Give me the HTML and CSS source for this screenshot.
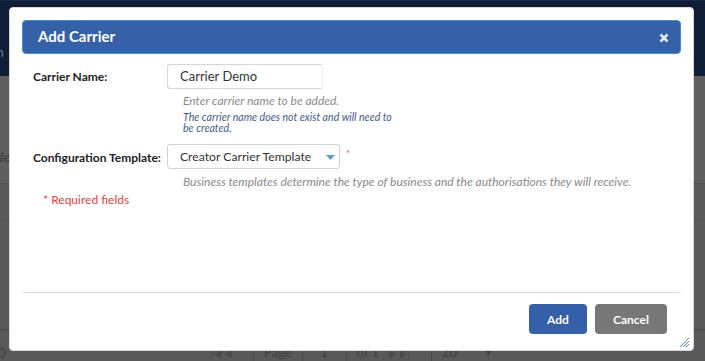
FILE: index.html
```html
<!DOCTYPE html>
<html>
<head>
<meta charset="utf-8">
<link rel="stylesheet" href="styles.css">
</head>
<body>
<div class="page">
  <div class="topbar"><span class="tb-text">n</span></div>
  <div class="content">
    <div class="row row-hl"><span class="row-text">de</span></div>
    <div class="row"></div>
    <div class="row row-tall"></div>
    <div class="pager">
      <span class="pg-left">0</span>
      <span class="pg-nav">|◀ ◀</span>
      <span class="pg-cell">Page</span>
      <span class="pg-cell pg-num">1</span>
      <span class="pg-cell">of 1</span>
      <span class="pg-nav">▶ ▶|</span>
      <span class="pg-cell pg-size">20 <span class="pg-caret">▾</span></span>
    </div>
  </div>
</div>

<div class="modal">
  <div class="modal-header">
    <span class="modal-title">Add Carrier</span>
    <svg class="close" width="10" height="10" viewBox="0 0 10 10"><path d="M1.5 1.5 L8.5 8.5 M8.5 1.5 L1.5 8.5" stroke="#e4e8f2" stroke-width="2.6" stroke-linecap="butt"/></svg>
  </div>
  <div class="modal-body">
    <div class="field">
      <label class="label">Carrier Name:</label>
      <div class="control">
        <div class="input">Carrier Demo</div>
        <div class="hint">Enter carrier name to be added.</div>
        <div class="note">The carrier name does not exist and will need to be created.</div>
      </div>
    </div>
    <div class="field field-2">
      <label class="label">Configuration Template:</label>
      <div class="control">
        <div class="select-row">
          <div class="select">Creator Carrier Template
            <svg class="caret" width="9" height="5" viewBox="0 0 9 5"><path d="M0 0 H9 L4.5 5 Z" fill="#5b9bd5"/></svg>
          </div>
          <span class="req-star">*</span>
        </div>
        <div class="hint">Business templates determine the type of business and the authorisations they will receive.</div>
      </div>
    </div>
    <div class="required">* Required fields</div>
  </div>
  <div class="modal-footer">
    <button class="btn btn-primary">Add</button>
    <button class="btn btn-cancel">Cancel</button>
  </div>
  <svg class="grip" width="11" height="11" viewBox="0 0 11 11"><path d="M10 1 L1 10 M10 4 L4 10 M10 7 L7 10" stroke="#4d90d9" stroke-width="1"/></svg>
</div>
</body>
</html>
```

FILE: styles.css
```css
* { box-sizing: border-box; }
html, body { margin: 0; padding: 0; }
body {
  width: 705px;
  height: 361px;
  overflow: hidden;
  position: relative;
  font-family: Lato, "Open Sans", sans-serif;
  background: #5a5a5a;
}
.page {
  display: flex;
  flex-direction: column;
  height: 361px;
}
.topbar {
  height: 76px;
  background: #0f1d37;
  border-top: 1px solid #16284a;
  position: relative;
}
.tb-text {
  display: block;
  margin-top: 42px;
  margin-left: -4px;
  color: #6d7890;
  font-size: 14px;
}
.content {
  flex: 1;
  display: flex;
  flex-direction: column;
  background: #595959;
}
.row {
  height: 36px;
  border-bottom: 1px solid #4f4f4f;
}
.row-hl {
  height: 108px;
  background: #5f5f5f;
  border-bottom: 1px solid #525252;
}
.row-text {
  display: block;
  margin-top: 72px;
  margin-left: -4px;
  color: #3a3a3a;
  font-size: 14px;
  font-style: italic;
}
.row-tall { height: 110px; }
.pager {
  display: flex;
  align-items: center;
  height: 30px;
  border-top: 1px solid #4c4c4c;
  color: #3e3e3e;
  font-size: 13px;
  padding-top: 14px;
}
.pg-left { margin-left: -2px; width: 213px; }
.pg-nav { width: 42px; color: #4a4a4a; font-size: 10px; }
.pg-cell { padding: 0 10px; border-left: 1px solid #4a4a4a; height: 16px; line-height: 14px; }
.pg-num { width: 44px; text-align: center; }
.pg-size { width: 70px; display: flex; justify-content: space-between; }
.pg-caret { font-size: 10px; }

.modal {
  position: absolute;
  left: 9px;
  top: 7px;
  width: 685px;
  height: 344px;
  background: #fff;
  border-radius: 4px;
  border: 1px solid #d8d8d8;
  padding: 12px 12px 0 12px;
  display: flex;
  flex-direction: column;
}
.modal-header {
  height: 34px;
  background: #3461a7;
  border: 1px solid #3d8ee0;
  border-radius: 4px;
  display: flex;
  align-items: center;
  justify-content: space-between;
  padding: 0 11px 0 15px;
}
.modal-title {
  color: #fff;
  font-weight: 700;
  font-size: 15px;
  margin-top: -3px;
}
.close { margin-top: 1px; }
.modal-body {
  flex: 1;
  padding: 10px 0 0 11px;
}
.field {
  display: flex;
  align-items: flex-start;
}
.label {
  width: 134px;
  font-size: 12px;
  font-weight: 700;
  color: #222;
  padding-top: 5px;
}
.control { display: flex; flex-direction: column; }
.input {
  width: 156px;
  height: 25px;
  border: 1px solid #d6d6d6;
  border-right-color: #f0f0f0;
  border-radius: 3px;
  font-size: 13px;
  color: #333;
  padding: 3px 0 0 12px;
}
.hint {
  font-size: 12px;
  font-style: italic;
  color: #8a8a8a;
  margin-top: 4px;
  margin-left: 16px;
  line-height: 15px;
}
.note {
  font-size: 10.6px;
  font-style: italic;
  color: #3f5c8c;
  margin-left: 16px;
  margin-top: 4px;
  line-height: 11px;
  width: 212px;
}
.field-2 { margin-top: 10px; }
.field-2 .label { padding-top: 6px; }
.select-row { display: flex; align-items: flex-start; }
.select {
  width: 173px;
  height: 25px;
  border: 1px solid #d2d2d2;
  border-radius: 3px;
  font-size: 12.2px;
  color: #333;
  padding: 4px 0 0 12px;
  position: relative;
}
.caret {
  position: absolute;
  right: 4px;
  top: 10px;
}
.req-star {
  color: #f03c3c;
  font-size: 9px;
  margin-left: 6px;
  margin-top: 4px;
}
.field-2 .hint { margin-top: 5px; }
.required {
  color: #f03c3c;
  font-size: 12px;
  margin-top: 3px;
  margin-left: 10px;
}
.modal-footer {
  height: 58px;
  border-top: 1px solid #dcdcdc;
  border-radius: 4px 4px 0 0;
  display: flex;
  justify-content: flex-end;
  align-items: flex-start;
  gap: 8px;
  padding: 11px 14px 0 0;
}
.btn {
  height: 30px;
  border: none;
  border-radius: 4px;
  color: #fff;
  font-family: Lato, sans-serif;
  font-weight: 700;
  font-size: 12px;
  padding: 0;
}
.btn-primary { width: 58px; background: #3360a8; }
.btn-cancel { width: 72px; background: #777; }
.grip {
  position: absolute;
  right: 3px;
  bottom: 2px;
}
```
